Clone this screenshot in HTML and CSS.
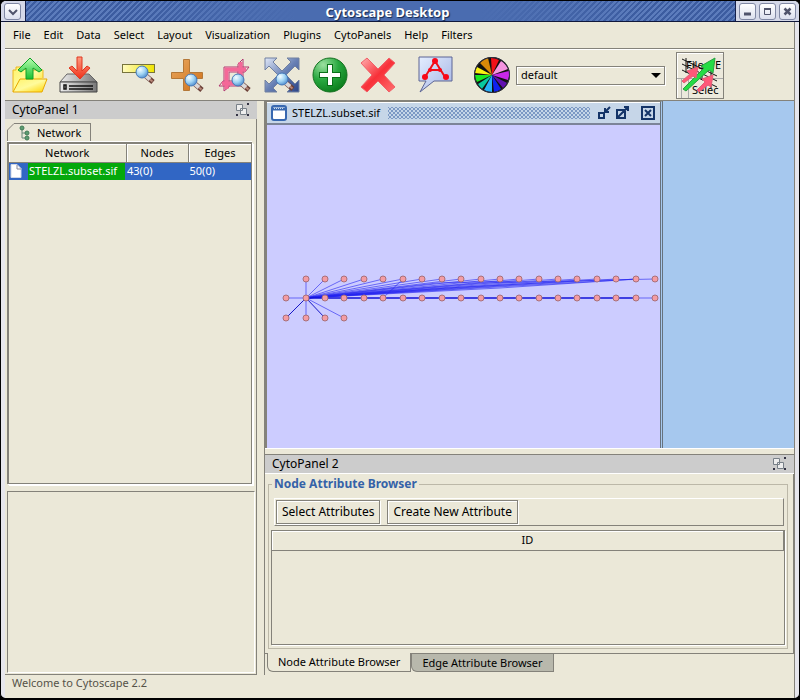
FILE: index.html
```
<!DOCTYPE html>
<html lang="en">
<head>
<meta charset="utf-8">
<title>Cytoscape Desktop</title>
<link rel="stylesheet" href="styles.css">
</head>
<body>
<svg class="defs" aria-hidden="true">
  <defs>
    <linearGradient id="yellow" x1="0" y1="0" x2="1" y2="1"><stop offset="0" stop-color="#fff36a"/><stop offset=".5" stop-color="#fffb9c"/><stop offset="1" stop-color="#ffd400"/></linearGradient>
    <linearGradient id="bar" x1="0" y1="0" x2="1" y2="0"><stop offset="0" stop-color="#fffbc0"/><stop offset="1" stop-color="#f0e400"/></linearGradient>
    <linearGradient id="greenArrow" x1="0" y1="0" x2="0" y2="1"><stop offset="0" stop-color="#b8ffb0"/><stop offset="1" stop-color="#18c030"/></linearGradient>
    <linearGradient id="redArrow" x1="0" y1="0" x2="0" y2="1"><stop offset="0" stop-color="#ff9a80"/><stop offset="1" stop-color="#f03018"/></linearGradient>
    <linearGradient id="metal" x1="0" y1="0" x2="1" y2="0"><stop offset="0" stop-color="#eee"/><stop offset="1" stop-color="#777"/></linearGradient>
    <linearGradient id="navy" x1="0" y1="0" x2="1" y2="1"><stop offset="0" stop-color="#e0e8f8"/><stop offset=".5" stop-color="#6880b4"/><stop offset="1" stop-color="#2c4488"/></linearGradient>
    <linearGradient id="orange" x1="0" y1="0" x2="1" y2="1"><stop offset="0" stop-color="#e8a860"/><stop offset="1" stop-color="#d07018"/></linearGradient>
    <linearGradient id="redX" x1="0" y1="0" x2="1" y2="1"><stop offset="0" stop-color="#ffb0b0"/><stop offset=".5" stop-color="#f83038"/><stop offset="1" stop-color="#ff7070"/></linearGradient>
    <linearGradient id="note" x1="0" y1="0" x2="1" y2="1"><stop offset="0" stop-color="#e4eeff"/><stop offset="1" stop-color="#a4b4e4"/></linearGradient>
    <radialGradient id="lensFill" cx=".35" cy=".3" r=".8"><stop offset="0" stop-color="#f4fcff"/><stop offset=".5" stop-color="#a0d4f4"/><stop offset="1" stop-color="#4080c8"/></radialGradient>
    <radialGradient id="greenBall" cx=".3" cy=".2" r=".9"><stop offset="0" stop-color="#9ce0a0"/><stop offset=".5" stop-color="#28a840"/><stop offset="1" stop-color="#087818"/></radialGradient>
    <g id="lens">
      <path d="M4 4L11 10" stroke="#6c4038" stroke-width="5"/>
      <path d="M4 4L8 7.500" stroke="#dcd8d8" stroke-width="4"/>
      <path d="M8 7.500L10.500 9.500" stroke="#b88878" stroke-width="2"/>
      <circle r="6" fill="url(#lensFill)" stroke="#4478b8"/>
    </g>
    <g id="float">
      <path d="M.5 1.500h6v6h-6zM4.500 5.500h6v6h-6z" fill="#eee" stroke="#788088"/>
      <path d="M11 0h2v2h-2zM0 11h2v2h-2zM11 11h2v2h-2z" fill="#334"/>
    </g>
    <marker id="node" markerWidth="8" markerHeight="8" refX="4" refY="4" markerUnits="userSpaceOnUse"><circle cx="4" cy="4" r="3" fill="#f49ca4" stroke="#a87078"/></marker>
  </defs>
</svg>

<div class="window">
  <header class="titlebar">
    <button class="wm" aria-label="Window menu"><svg viewBox="0 0 17 17"><path d="M4 6l4 4 4-4" fill="none" stroke="#50546c" stroke-width="2"/></svg></button>
    <h1>Cytoscape Desktop</h1>
    <div class="wm-group">
      <button class="wm" aria-label="Minimize"><svg viewBox="0 0 17 17"><path d="M4 10h7" stroke="#50546c" stroke-width="3"/></svg></button>
      <button class="wm" aria-label="Maximize"><svg viewBox="0 0 17 17"><path d="M4.500 5.500h6v5h-6z" fill="none" stroke="#50546c"/><path d="M4 5h7" stroke="#50546c" stroke-width="2"/></svg></button>
      <button class="wm" aria-label="Close"><svg viewBox="0 0 17 17"><path d="M4.500 4.500l6 6M10.500 4.500l-6 6" stroke="#50546c" stroke-width="2.500"/></svg></button>
    </div>
  </header>

  <div class="content">
    <nav class="menubar">
      <button>File</button><button>Edit</button><button>Data</button><button>Select</button><button>Layout</button><button>Visualization</button><button>Plugins</button><button>CytoPanels</button><button>Help</button><button>Filters</button>
    </nav>

    <div class="toolbar">
      <div class="tools">
        <button aria-label="Open session"><svg viewBox="0 0 40 40"><path d="M3 37V15h3v-3h8l2 3h17v8" fill="url(#yellow)" stroke="#ecb820"/><path d="M3 37L10 24H37L32 37z" fill="url(#yellow)" stroke="#e8a800"/><path d="M20 3L32 15L29 17L23 13V24H16V13L11 17L8 15z" fill="url(#greenArrow)" stroke="#10a028"/></svg></button>
        <button aria-label="Save session"><svg viewBox="0 0 40 40"><path d="M2 27L9 19H31L39 27z" fill="url(#metal)" stroke="#666"/><path d="M2 27H39V37H2z" fill="url(#metal)" stroke="#444"/><path d="M6 30h2v4H6zM11 31h24M11 34h24" stroke="#111" fill="none" stroke-width="1.500"/><path d="M19 2H24V16L29 11L32 13L22 24L11 13L14 11L19 16z" fill="url(#redArrow)" stroke="#e03820"/></svg></button>
      </div>
      <div class="tools">
        <button aria-label="Zoom out"><svg viewBox="0 0 40 40"><rect x="4.500" y="9.500" width="32" height="8" fill="url(#bar)" stroke="#77743c"/><use href="#lens" x="24" y="17"/></svg></button>
        <button aria-label="Zoom in"><svg viewBox="0 0 40 40"><path d="M17.500 4.500h6v13h13v6h-13v12h-6v-12h-12v-6h12z" fill="url(#orange)" stroke="#b47838"/><use href="#lens" x="25" y="25"/></svg></button>
        <button aria-label="Zoom selected region"><svg viewBox="0 0 40 40"><path d="M10 36V12H35L31 17H15V32zM29 4V31H5L9 26H24V9z" fill="none" stroke="#b03870"/><path d="M12.500 34V14.500H32M26.500 7V28.500H8" fill="none" stroke="#f46898" stroke-width="4"/><use href="#lens" x="24" y="25"/></svg></button>
        <button aria-label="Fit network"><svg viewBox="0 0 40 40"><path d="M3 3h12l-4 4 9 9 9-9-4-4h12v12l-4-4-9 9 9 9 4-4v12H25l4-4-9-9-9 9 4 4H3V25l4 4 9-9-9-9-4 4z" fill="url(#navy)" stroke="#7080a0"/><use href="#lens" x="20" y="24"/></svg></button>
        <button aria-label="Create"><svg viewBox="0 0 40 40"><circle cx="20" cy="20" r="17" fill="url(#greenBall)" stroke="#147020"/><path d="M20 9V31M9 20H31" stroke="#087018" stroke-width="6"/><path d="M20 10V30M10 20H30" stroke="#fff" stroke-width="4"/></svg></button>
        <button aria-label="Delete"><svg viewBox="0 0 40 40"><path d="M9 3L20 14L31 3L37 8L26 20L37 32L31 37L20 26L9 37L3 32L14 20L3 8z" fill="url(#redX)" stroke="#f06068"/></svg></button>
      </div>
      <div class="tools">
        <button aria-label="Annotate"><svg viewBox="0 0 40 40"><path d="M4 2H37V26H19L5 37L11 26H4z" fill="url(#note)" stroke="#5c6494"/><path d="M20 6L10 22M20 6L30 22M15 15H25" fill="none" stroke="#f01018" stroke-width="2"/><g fill="#f80818"><circle cx="20" cy="6" r="3"/><circle cx="15" cy="15" r="2"/><circle cx="25" cy="15" r="2"/><circle cx="10" cy="22" r="3"/><circle cx="31" cy="22" r="3"/></g></svg></button>
      </div>
      <div class="tools">
        <button aria-label="Visual mapper"><svg viewBox="-20 -20 40 40"><circle r="18" fill="#111"/><path fill="#f01018" d="M0 0L-1-17A17 17 0 0 1 7-15z"/><path fill="#f494e0" d="M0 0L9-14A17 17 0 0 1 16-6z"/><path fill="#c828e8" d="M0 0L17-4A17 17 0 0 1 16 5z"/><path fill="#6010b0" d="M0 0L15 8A17 17 0 0 1 11 13z"/><path fill="#1020f0" d="M0 0L9 14A17 17 0 0 1 2 17z"/><path fill="#28b0f8" d="M0 0L0 17A17 17 0 0 1-8 15z"/><path fill="#08c8a0" d="M0 0L-10 14A17 17 0 0 1-14 9z"/><path fill="#18e820" d="M0 0L-15 7A17 17 0 0 1-17 0z"/><path fill="#f8f010" d="M0 0L-17-2A17 17 0 0 1-15-8z"/><path fill="#d88808" d="M0 0L-12-12A17 17 0 0 1-4-17z"/><circle r="17.500" fill="none" stroke="#334"/></svg></button>
        <label class="combo"><select aria-label="Visual style"><option>default</option></select><svg viewBox="0 0 10 5"><path d="M0 0h10L5 5z"/></svg></label>
      </div>
      <button class="preview" aria-label="Toggle graphics details"><svg viewBox="0 0 46 45"><path d="M0 25.500H46M4.500 26V45M11.500 26V45" stroke="#aaa"/><text x="9" y="16">File</text><text x="38" y="16">E</text><text x="15" y="41">Selec</text><path d="M5 6L40 23M5 11L40 28M5 17L40 34M9 5V20M17 9V23M25 13V26M34 17V35" stroke="#111"/><path d="M6 36L27 15L24 13L38 5L36 20L32 17L9 38z" fill="#24dc44" stroke="#28a040"/><path d="M5 28L13 21L10 18L21 14L19 25L16 23L7 30zM20 37L28 29L25 26L36 22L34 34L31 32L22 39z" fill="#ff5878" stroke="#e06078"/></svg></button>
    </div>

    <main class="workspace">
      <aside class="side">
        <div class="panel-head"><h2>CytoPanel 1</h2><button aria-label="Float panel"><svg viewBox="0 0 14 14"><use href="#float"/></svg></button></div>
        <div class="side-body">
          <div class="tabs-top"><svg class="tab-slope" viewBox="0 0 8 19"><path d="M8 0H6L0 7V19H8z" fill="#ebe8d8"/><path d="M.5 19V7L7 .5H8" fill="none" stroke="#84807a"/></svg><button><svg class="tree-icon" viewBox="0 0 12 16"><path d="M3 3V13H8M3 8H8" fill="none" stroke="#688878"/><g fill="#5c9c70" stroke="#447c58"><circle cx="3" cy="3" r="2"/><circle cx="8" cy="8" r="2"/><circle cx="8" cy="13" r="2"/></g></svg>Network</button></div>
          <div class="tree-box">
            <table class="networks">
              <thead><tr><th class="c-name">Network</th><th class="c-num">Nodes</th><th class="c-num">Edges</th></tr></thead>
              <tbody><tr><td><div class="net-name"><svg viewBox="0 0 12 14"><path d="M1 .5h6l4 4v9H1z" fill="#fff" stroke="#d0d8e8"/><path d="M7 1v4h4" fill="none" stroke="#889"/></svg><span>STELZL.subset.sif</span></div></td><td>43(0)</td><td>50(0)</td></tr></tbody>
            </table>
          </div>
          <div class="overview"></div>
        </div>
      </aside>

      <div class="right">
        <section class="desktop">
          <div class="frame">
            <div class="frame-head">
              <svg class="frame-icon" viewBox="0 0 16 16"><rect x="1" y="1" width="14" height="14" rx="2" fill="#fff" stroke="#3868b0" stroke-width="2"/><path d="M2 4h12" stroke="#3868b0" stroke-width="3"/><path d="M3 3.500h10" stroke="#cde" stroke-dasharray="1 1"/></svg>
              <h2>STELZL.subset.sif</h2>
              <div class="grip"></div>
              <button aria-label="Iconify"><svg viewBox="0 0 16 16"><path d="M3 8h5v5H3zM14 2L9 7M9 3v4h4" fill="none" stroke="#143468" stroke-width="2"/></svg></button>
              <button aria-label="Maximize network"><svg viewBox="0 0 16 16"><path d="M3 5h8v8H3zM4 12L14 2M10 2h4v4" fill="none" stroke="#143468" stroke-width="2"/></svg></button>
              <button class="frame-close" aria-label="Close network"><svg viewBox="0 0 16 16"><path d="M2 2h12v12H2zM5 5l6 6M11 5l-6 6" fill="none" stroke="#143468" stroke-width="2"/></svg></button>
            </div>
            <svg class="graph" viewBox="0 0 393 323" preserveAspectRatio="xMinYMin meet" role="img" aria-label="Network graph">
              <g fill="none" stroke="#2424f0" stroke-width=".6">
                <path d="M39 173L19 193M39 173L58 193" stroke="#1818c8" stroke-width="1"/>
                <path d="M19 173H39V154M39 173V193M39 173L77 193M39 173L58 154M39 173L77 154M39 173L97 154M39 173L116 154M39 173L136 154M39 173L155 154M39 173L175 154M39 173L194 154M39 173L214 154M39 173L233 154M39 173L252 154M39 173L272 154M39 173L291 154M39 173L310 154M39 173L330 154M39 173L349 154M39 173L369 154M116 173L136 154"/>
                <path d="M39 173L214 158L388 154M39 173L180 163L310 156M39 173L233 163L369 154M39 173L170 158L250 156"/>
                <path d="M39 173H369" stroke="#1010d8" stroke-width="1.500"/><path d="M369 173H388"/>
              </g>
              <g fill="none" marker-start="url(#node)" marker-mid="url(#node)" marker-end="url(#node)">
                <path d="M39 154L58 154L77 154L97 154L116 154L136 154L155 154L175 154L194 154L214 154L233 154L252 154L272 154L291 154L310 154L330 154L349 154L369 154L388 154"/>
                <path d="M19 173L39 173L58 173L77 173L97 173L116 173L136 173L155 173L175 173L194 173L214 173L233 173L252 173L272 173L291 173L310 173L330 173L349 173L369 173L388 173"/>
                <path d="M19 193L39 193L58 193L77 193"/>
              </g>
            </svg>
          </div>
        </section>

        <section class="panel2">
          <div class="panel-head"><h2>CytoPanel 2</h2><button aria-label="Float panel"><svg viewBox="0 0 14 14"><use href="#float"/></svg></button></div>
          <div class="panel2-body">
            <fieldset>
              <legend>Node Attribute Browser</legend>
              <div class="attr-tools"><button>Select Attributes</button><button>Create New Attribute</button></div>
              <div class="attr-box"><table class="attrs"><thead><tr><th>ID</th></tr></thead></table></div>
            </fieldset>
          </div>
          <div class="tabs-bottom"><button class="on">Node Attribute Browser</button><button>Edge Attribute Browser</button></div>
        </section>
      </div>
    </main>
    <footer class="status">Welcome to Cytoscape 2.2</footer>
  </div>
</div>
</body>
</html>
```
FILE: styles.css
```
* { box-sizing: border-box; }
html, body { height: 100%; }
body {
  margin: 0;
  background: #000;
  color: #000;
  font: 11px/16px "Noto Sans", "Open Sans", sans-serif;
}
h1, h2 { margin: 0; font-weight: normal; font-size: 12px; }
button { margin: 0; padding: 0; border: 0; background: none; color: inherit; font: inherit; }
svg { display: block; }
table { border-collapse: collapse; width: 100%; }
.defs { position: absolute; width: 0; height: 0; }

.window {
  min-height: 100%;
  display: flex;
  flex-direction: column;
  border: 1px solid #000;
  border-bottom-width: 2px;
  border-radius: 6px;
  overflow: hidden;
  background: #e6e6ec;
}

/* Title bar */
.titlebar {
  display: flex;
  align-items: center;
  height: 21px;
  flex: none;
  padding: 0 3px;
  border-bottom: 1px solid #10183c;
  background: #d4d8e8;
}
.titlebar h1 {
  flex: 1;
  margin: 0 3px 0 4px;
  padding-left: 14px;
  height: 20px;
  text-align: center;
  color: #fff;
  font-weight: bold;
  font-size: 13px;
  line-height: 22px;
  text-shadow: 1px 1px 1px #14284c;
  border-left: 1px solid #14204c;
  border-right: 1px solid #14204c;
  background:
    linear-gradient(90deg, transparent 15%, #4a6cb0 38%, #4a6cb0 64%, transparent 87%),
    repeating-linear-gradient(135deg, #5c7cbc 0 2px, #3c5ca0 2px 4px);
}
.wm {
  width: 17px;
  height: 17px;
  border: 1px solid #8088a4;
  border-radius: 3px;
  background: linear-gradient(#fff, #dce0ee);
}
.wm svg { width: 17px; height: 17px; }
.wm-group { display: flex; gap: 3px; }

.content {
  flex: 1;
  display: flex;
  flex-direction: column;
  margin: 0 4px;
  background: #ebe8d8;
  border-right: 1px solid #84827a;
}

/* Menus and tools */
.menubar {
  display: flex;
  gap: 13px;
  height: 27px;
  padding: 0 8px;
  border-bottom: 1px solid #84827a;
}
.toolbar {
  display: flex;
  align-items: center;
  height: 52px;
  padding: 0 5px;
  border-top: 1px solid #fff;
  border-bottom: 1px solid #84827a;
}
.tools { display: flex; align-items: center; gap: 8px; margin-right: 17px; }
.tools:first-child { margin-right: 20px; }
.tools button, .tools button svg { width: 40px; height: 40px; }
.combo { display: flex; align-items: center; margin-left: -4px; width: 149px; }
.combo select {
  appearance: none;
  width: 100%;
  height: 19px;
  padding: 0 4px;
  border: 1px solid #84827a;
  border-radius: 0;
  background: #ebe8d8;
  color: #000;
  font: inherit;
  outline: 0;
  box-shadow: inset 1px 1px #fff, 1px 1px #fff;
}
.combo svg { width: 10px; height: 5px; margin-left: -14px; margin-right: 4px; flex: none; pointer-events: none; }
.preview { width: 48px; height: 47px; margin-left: -6px; border: 1px solid #84827a; background: #ece9dc; box-shadow: inset 1px 1px #fff; }
.preview svg { width: 46px; height: 45px; }
.preview text { font-size: 11px; }

/* Panels */
.workspace { flex: 1; display: flex; }
.side { width: 252px; flex: none; display: flex; flex-direction: column; }
.panel-head {
  display: flex;
  justify-content: space-between;
  align-items: center;
  height: 18px;
  padding: 0 7px;
  background: #ccc;
}
.panel-head svg { width: 14px; height: 14px; }
.side-body {
  flex: 1;
  display: flex;
  flex-direction: column;
  padding: 4px 1px 1px 2px;
  border-right: 1px solid #84827a;
  border-bottom: 1px solid #84827a;
}
.tabs-top { display: flex; height: 19px; }
.tab-slope { width: 8px; height: 19px; }
.tabs-top button {
  display: flex;
  align-items: center;
  gap: 6px;
  padding: 0 9px 0 4px;
  border-top: 1px solid #84827a;
  border-right: 1px solid #84827a;
}
.tree-icon { width: 12px; height: 16px; }
.tree-box {
  flex: 1;
  margin-right: 3px;
  border: 1px solid #84827a;
  border-top-width: 2px;
  border-left-width: 2px;
  box-shadow: 0 -1px #fff, 1px 1px #fff, 2px 2px #fff;
}
.networks { table-layout: fixed; }
.networks th { height: 18px; padding: 0; font-weight: normal; border-bottom: 1px solid #84827a; box-shadow: inset 1px 1px #fff; }
.networks th + th { border-left: 1px solid #84827a; }
.c-name { width: 117px; }
.networks td { height: 17px; padding: 0 1px; background: #3166c4; color: #fff; }
.net-name { display: flex; align-items: center; gap: 6px; white-space: nowrap; }
.net-name svg { width: 12px; height: 14px; flex: none; }
.net-name span { flex: 1; height: 17px; padding-left: 1px; background: #04a80c; }
.overview {
  height: 182px;
  margin-top: 7px;
  border: 1px solid #84827a;
  border-right-color: #fff;
  border-bottom-color: #fff;
}

.right { flex: 1; min-width: 0; margin-left: 7px; display: flex; flex-direction: column; border-left: 1px solid #84827a; }
.desktop { flex: 1; display: flex; background: #a6c8ee; border-bottom: 1px solid #fff; }
.frame { width: 398px; display: flex; flex-direction: column; border: 1px solid #84827a; border-left-width: 2px; border-right: 3px double #66727e; border-bottom: 0; }
.frame-head {
  display: flex;
  align-items: center;
  height: 23px;
  padding: 0 4px 0 4px;
  border-bottom: 2px solid #7c8498;
  box-shadow: inset 0 1px #fff;
  background: #c6d6e8;
}
.frame-head svg { width: 16px; height: 16px; }
.frame-head h2 { margin: 0 8px 0 5px; font-size: 11px; }
.grip {
  flex: 1;
  height: 12px;
  margin-right: 6px;
  background: radial-gradient(circle, #7c98c4 30%, transparent 45%) 0 0 / 4px 4px,
    radial-gradient(circle, #7c98c4 30%, transparent 45%) 2px 2px / 4px 4px;
}
.frame-head button + button { margin-left: 2px; }
.frame-head .frame-close { margin-left: 10px; }
.graph { width: 100%; flex: 1; min-height: 0; background: #ccf; }

.panel2 { margin-top: 5px; border-top: 1px solid #84827a; }
.panel2 .panel-head { border-bottom: 1px solid #fff; height: 19px; }
.panel2-body { padding: 1px 5px 4px 3px; border-bottom: 1px solid #84827a; border-right: 1px solid #84827a; }
fieldset { margin: 0; padding: 5px 2px 3px 2px; border: 1px solid #bcb8a8; min-width: 0; }
legend { margin-left: 1px; padding: 0 2px; color: #3562a8; font-weight: bold; font-size: 12px; line-height: 18px; }
.attr-tools {
  display: flex;
  gap: 7px;
  height: 28px;
  margin: 0 1px 4px 3px;
  padding: 1px;
  border: 1px solid #fff;
  border-right-color: #84827a;
  border-bottom-color: #84827a;
}
.attr-tools button { height: 24px; padding: 0 5px; font-size: 12px; border: 1px solid #84827a; box-shadow: inset 1px 1px #fff, 1px 1px #fff; }
.attr-box { height: 115px; border: 1px solid #84827a; box-shadow: 1px 1px #fff; }
.attrs th { height: 19px; padding: 0; font-weight: normal; border-right: 1px solid #84827a; border-bottom: 1px solid #84827a; box-shadow: inset 1px 1px #fff; }
.tabs-bottom { display: flex; height: 21px; padding-left: 2px; }
.tabs-bottom button {
  height: 18px;
  padding: 0 10px;
  border: 1px solid #84827a;
  border-top: 0;
  border-bottom-left-radius: 6px;
  background: #b8b8ac;
}
.tabs-bottom .on { margin-top: -1px; height: 19px; background: #ebe8d8; }
.status { height: 23px; padding: 0 7px; color: #555248; }
```
